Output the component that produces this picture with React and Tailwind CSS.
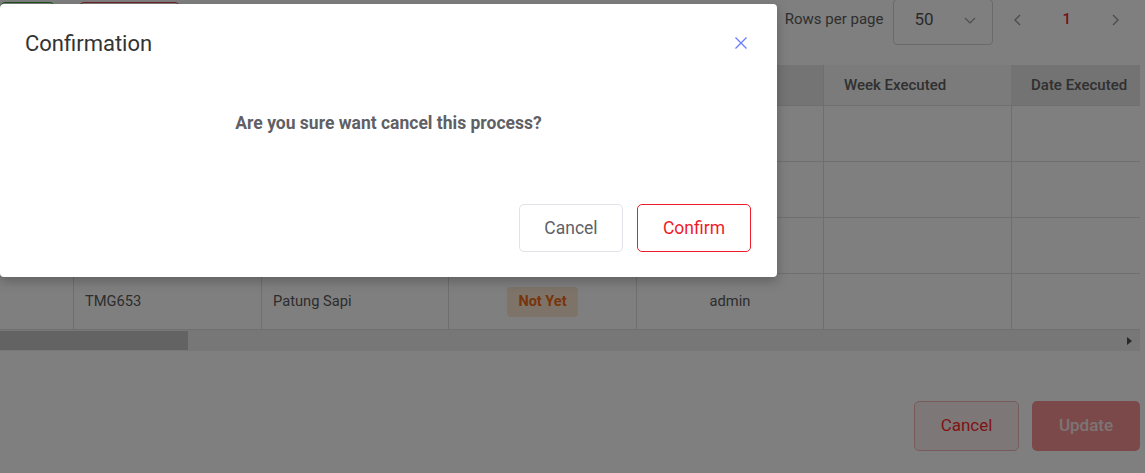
import React from 'react'

const rows = [
  { code: '', name: '', status: '', user: '' },
  { code: '', name: '', status: '', user: '' },
  { code: '', name: '', status: '', user: '' },
  { code: 'TMG653', name: 'Patung Sapi', status: 'Not Yet', user: 'admin' },
]

function ChevronLeft() {
  return (
    <svg className="w-4 h-4" viewBox="0 0 16 16" fill="none" stroke="currentColor" strokeWidth="1.4">
      <path d="M10 3 5 8l5 5" />
    </svg>
  )
}

function ChevronRight() {
  return (
    <svg className="w-4 h-4" viewBox="0 0 16 16" fill="none" stroke="currentColor" strokeWidth="1.4">
      <path d="m6 3 5 5-5 5" />
    </svg>
  )
}

export default function App() {
  return (
    <div className="relative w-[1145px] h-[473px] overflow-hidden bg-white font-['Roboto',sans-serif]">
      {/* Page behind the dialog */}
      <div className="flex flex-col">
        {/* Toolbar */}
        <div className="flex items-start h-[65px]">
          <div className="flex gap-[24px] pt-[2px]">
            <div className="w-[55px] h-[40px] border border-[#3aa33a] rounded-[5px]" />
            <div className="w-[101px] h-[40px] border border-[#e0444c] rounded-[5px]" />
          </div>
          <div className="ml-auto flex items-center h-[39px] pr-[22px]">
            <span className="text-[15px] text-[#5c5c5c] mr-[10px]">Rows per page</span>
            <div className="w-[100px] h-[46px] mt-[4px] border border-[#d4d4d4] rounded-[4px] flex items-center pl-[20px] pr-[14px]">
              <span className="text-[17px] text-[#555] -mt-[4px]">50</span>
              <svg className="ml-auto -mt-[4px] w-4 h-4 text-[#9a9a9a]" viewBox="0 0 16 16" fill="none" stroke="currentColor" strokeWidth="1.2">
                <path d="m3 6 5 5 5-5" />
              </svg>
            </div>
            <div className="flex items-center ml-[17px] text-[#9a9a9a]">
              <ChevronLeft />
              <span className="text-[15px] font-medium text-[#e8262e] mx-[36px]">1</span>
              <ChevronRight />
            </div>
          </div>
        </div>

        {/* Table */}
        <div className="w-[1140px]">
          <div className="grid grid-cols-[73px_188px_187px_188px_187px_188px_129px] h-[40px] text-[15px] font-medium text-[#606060]">
            <div className="bg-[#e9e9e9]" />
            <div className="bg-[#e9e9e9]" />
            <div className="bg-[#e9e9e9]" />
            <div className="bg-[#e9e9e9]" />
            <div className="bg-[#e9e9e9]" />
            <div className="bg-[#f7f7f7] flex items-center pl-[20px] border-l border-[#dedede]">Week Executed</div>
            <div className="bg-[#e6e6e6] flex items-center pl-[20px]">Date Executed</div>
          </div>
          {rows.map((r, i) => (
            <div
              key={i}
              className="grid grid-cols-[73px_188px_187px_188px_187px_188px_129px] h-[56px] border-t border-[#dedede] text-[14.7px] text-[#5a5a5a]"
            >
              <div />
              <div className="border-l border-[#dedede] flex items-center pl-[11px]">{r.code}</div>
              <div className="border-l border-[#dedede] flex items-center pl-[11px]">{r.name}</div>
              <div className="border-l border-[#dedede] flex items-center justify-center">
                {r.status && (
                  <span className="px-[11px] h-[30px] flex items-center rounded-[4px] bg-[#fde6d2] text-[#f26a14] text-[14.5px] font-bold">
                    {r.status}
                  </span>
                )}
              </div>
              <div className="border-l border-[#dedede] flex items-center justify-center">{r.user}</div>
              <div className="border-l border-[#dedede]" />
              <div className="border-l border-[#dedede]" />
            </div>
          ))}
          {/* Horizontal scrollbar */}
          <div className="flex items-center h-[22px] bg-[#eeeeee] border-t border-[#dedede]">
            <div className="w-[188px] h-[19px] bg-[#c6c6c6]" />
            <div className="ml-auto mr-[8px] w-0 h-0 border-y-[4px] border-y-transparent border-l-[5px] border-l-[#505050]" />
          </div>
        </div>

        {/* Footer actions */}
        <div className="flex justify-end gap-[13px] pr-[5px] pt-[50px]">
          <button className="w-[105px] h-[50px] rounded-[5px] border border-[#f2b4b4] bg-[#fcefef] text-[#ff2b2b] text-[17px]">
            Cancel
          </button>
          <button className="w-[108px] h-[50px] rounded-[5px] bg-[#f79292] text-[#fbe9e9] text-[17px] font-medium">
            Update
          </button>
        </div>
      </div>

      {/* Overlay */}
      <div className="absolute inset-0 bg-black/50" />

      {/* Dialog */}
      <div className="absolute left-0 top-[4px] w-[777px] h-[273px] bg-white rounded-[4px] shadow-[0_4px_12px_rgba(0,0,0,0.25)] flex flex-col">
        <div className="flex items-center h-[78px] pl-[25px] pr-[30px]">
          <h2 className="text-[22px] text-[#333]">Confirmation</h2>
          <svg className="ml-auto w-[12px] h-[12px] text-[#6c7cff]" viewBox="0 0 12 12" fill="none" stroke="currentColor" strokeWidth="1.3">
            <path d="M0.5 0.5 11.5 11.5M11.5 0.5 0.5 11.5" />
          </svg>
        </div>
        <p className="pt-[29px] text-center text-[17.5px] leading-[24px] font-bold text-[#5f6066]">
          Are you sure want cancel this process?
        </p>
        <div className="mt-auto flex justify-end gap-[14px] pr-[26px] pb-[25px]">
          <button className="w-[104px] h-[48px] rounded-[5px] border border-[#e2e2e8] text-[17.5px] text-[#5f5f68]">
            Cancel
          </button>
          <button className="w-[114px] h-[48px] rounded-[5px] border border-[#ee1c2a] text-[17.5px] text-[#ee1c2a]">
            Confirm
          </button>
        </div>
      </div>
    </div>
  )
}
